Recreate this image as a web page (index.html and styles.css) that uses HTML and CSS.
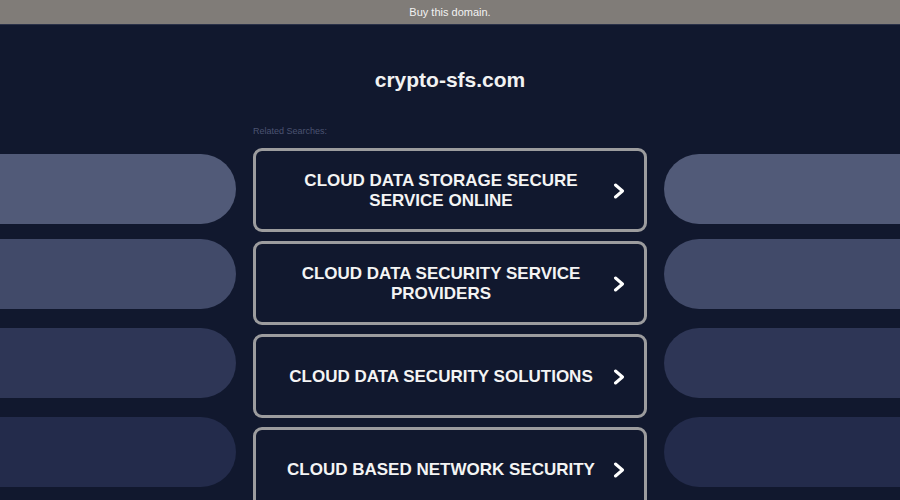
FILE: index.html
```html
<!DOCTYPE html>
<html lang="en">
<head>
<meta charset="utf-8">
<title>crypto-sfs.com</title>
<link rel="stylesheet" href="styles.css">
</head>
<body>
<div class="topbar">Buy this domain.</div>
<header class="head"><h1 class="domain">crypto-sfs.com</h1></header>
<main class="layout">
  <div class="side side-left">
    <div class="pill p1"></div>
    <div class="pill p2"></div>
    <div class="pill p3"></div>
    <div class="pill p4"></div>
  </div>
  <div class="center">
    <p class="label">Related Searches:</p>
    <a class="card" href="#"><span class="card-text">CLOUD DATA STORAGE SECURE SERVICE ONLINE</span><svg class="chev" viewBox="0 0 12 16" width="12" height="16"><polyline points="2.5,2 9.5,8 2.5,14" fill="none" stroke="#fff" stroke-width="3" stroke-linecap="round" stroke-linejoin="round"/></svg></a>
    <a class="card" href="#"><span class="card-text">CLOUD DATA SECURITY SERVICE PROVIDERS</span><svg class="chev" viewBox="0 0 12 16" width="12" height="16"><polyline points="2.5,2 9.5,8 2.5,14" fill="none" stroke="#fff" stroke-width="3" stroke-linecap="round" stroke-linejoin="round"/></svg></a>
    <a class="card" href="#"><span class="card-text">CLOUD DATA SECURITY SOLUTIONS</span><svg class="chev" viewBox="0 0 12 16" width="12" height="16"><polyline points="2.5,2 9.5,8 2.5,14" fill="none" stroke="#fff" stroke-width="3" stroke-linecap="round" stroke-linejoin="round"/></svg></a>
    <a class="card" href="#"><span class="card-text">CLOUD BASED NETWORK SECURITY</span><svg class="chev" viewBox="0 0 12 16" width="12" height="16"><polyline points="2.5,2 9.5,8 2.5,14" fill="none" stroke="#fff" stroke-width="3" stroke-linecap="round" stroke-linejoin="round"/></svg></a>
  </div>
  <div class="side side-right">
    <div class="pill p1"></div>
    <div class="pill p2"></div>
    <div class="pill p3"></div>
    <div class="pill p4"></div>
  </div>
</main>
</body>
</html>
```
FILE: styles.css
```css
html, body {
  margin: 0;
  padding: 0;
}
body {
  background: #11182e;
  font-family: "Liberation Sans", Arial, sans-serif;
  height: 500px;
  overflow: hidden;
}
.topbar {
  height: 25px;
  line-height: 24px;
  background: #807c78;
  color: #f2f2f2;
  font-size: 11px;
  text-align: center;
  border-bottom: 1px solid #2a3148;
  box-sizing: border-box;
}
.head {
  padding: 42px 0 33px;
  text-align: center;
}
.domain {
  margin: 0;
  font-size: 21px;
  line-height: 26px;
  font-weight: bold;
  color: #f2f2f2;
}
.layout {
  display: grid;
  grid-template-columns: 236px 394px 236px;
  column-gap: 17px;
  margin-top: -2px;
}
.side {
  display: flex;
  flex-direction: column;
  padding-top: 30px;
}
.pill {
  height: 70px;
  flex: none;
}
.side-left .pill {
  border-radius: 0 35px 35px 0;
}
.side-right .pill {
  border-radius: 35px 0 0 35px;
}
.pill.p2 { margin-top: 15px; }
.pill.p3 { margin-top: 19px; }
.pill.p4 { margin-top: 19px; }
.p1 { background: #515a78; }
.p2 { background: #414a69; }
.p3 { background: #2e3656; }
.p4 { background: #232b4b; }
.center {
  display: flex;
  flex-direction: column;
}
.label {
  margin: 0 0 10px;
  font-size: 9px;
  line-height: 14px;
  color: #4b5371;
}
.card {
  display: flex;
  align-items: center;
  height: 84px;
  box-sizing: border-box;
  border: 3px solid #9c9c9e;
  border-radius: 9px;
  padding: 2px 19px 0 30px;
  margin-bottom: 9px;
  text-decoration: none;
  flex: none;
}
.card-text {
  flex: 1;
  text-align: center;
  color: #f4f4f4;
  font-weight: bold;
  font-size: 17px;
  line-height: 20.5px;
}
.chev {
  flex: none;
  margin-left: 17px;
  display: block;
}
```
